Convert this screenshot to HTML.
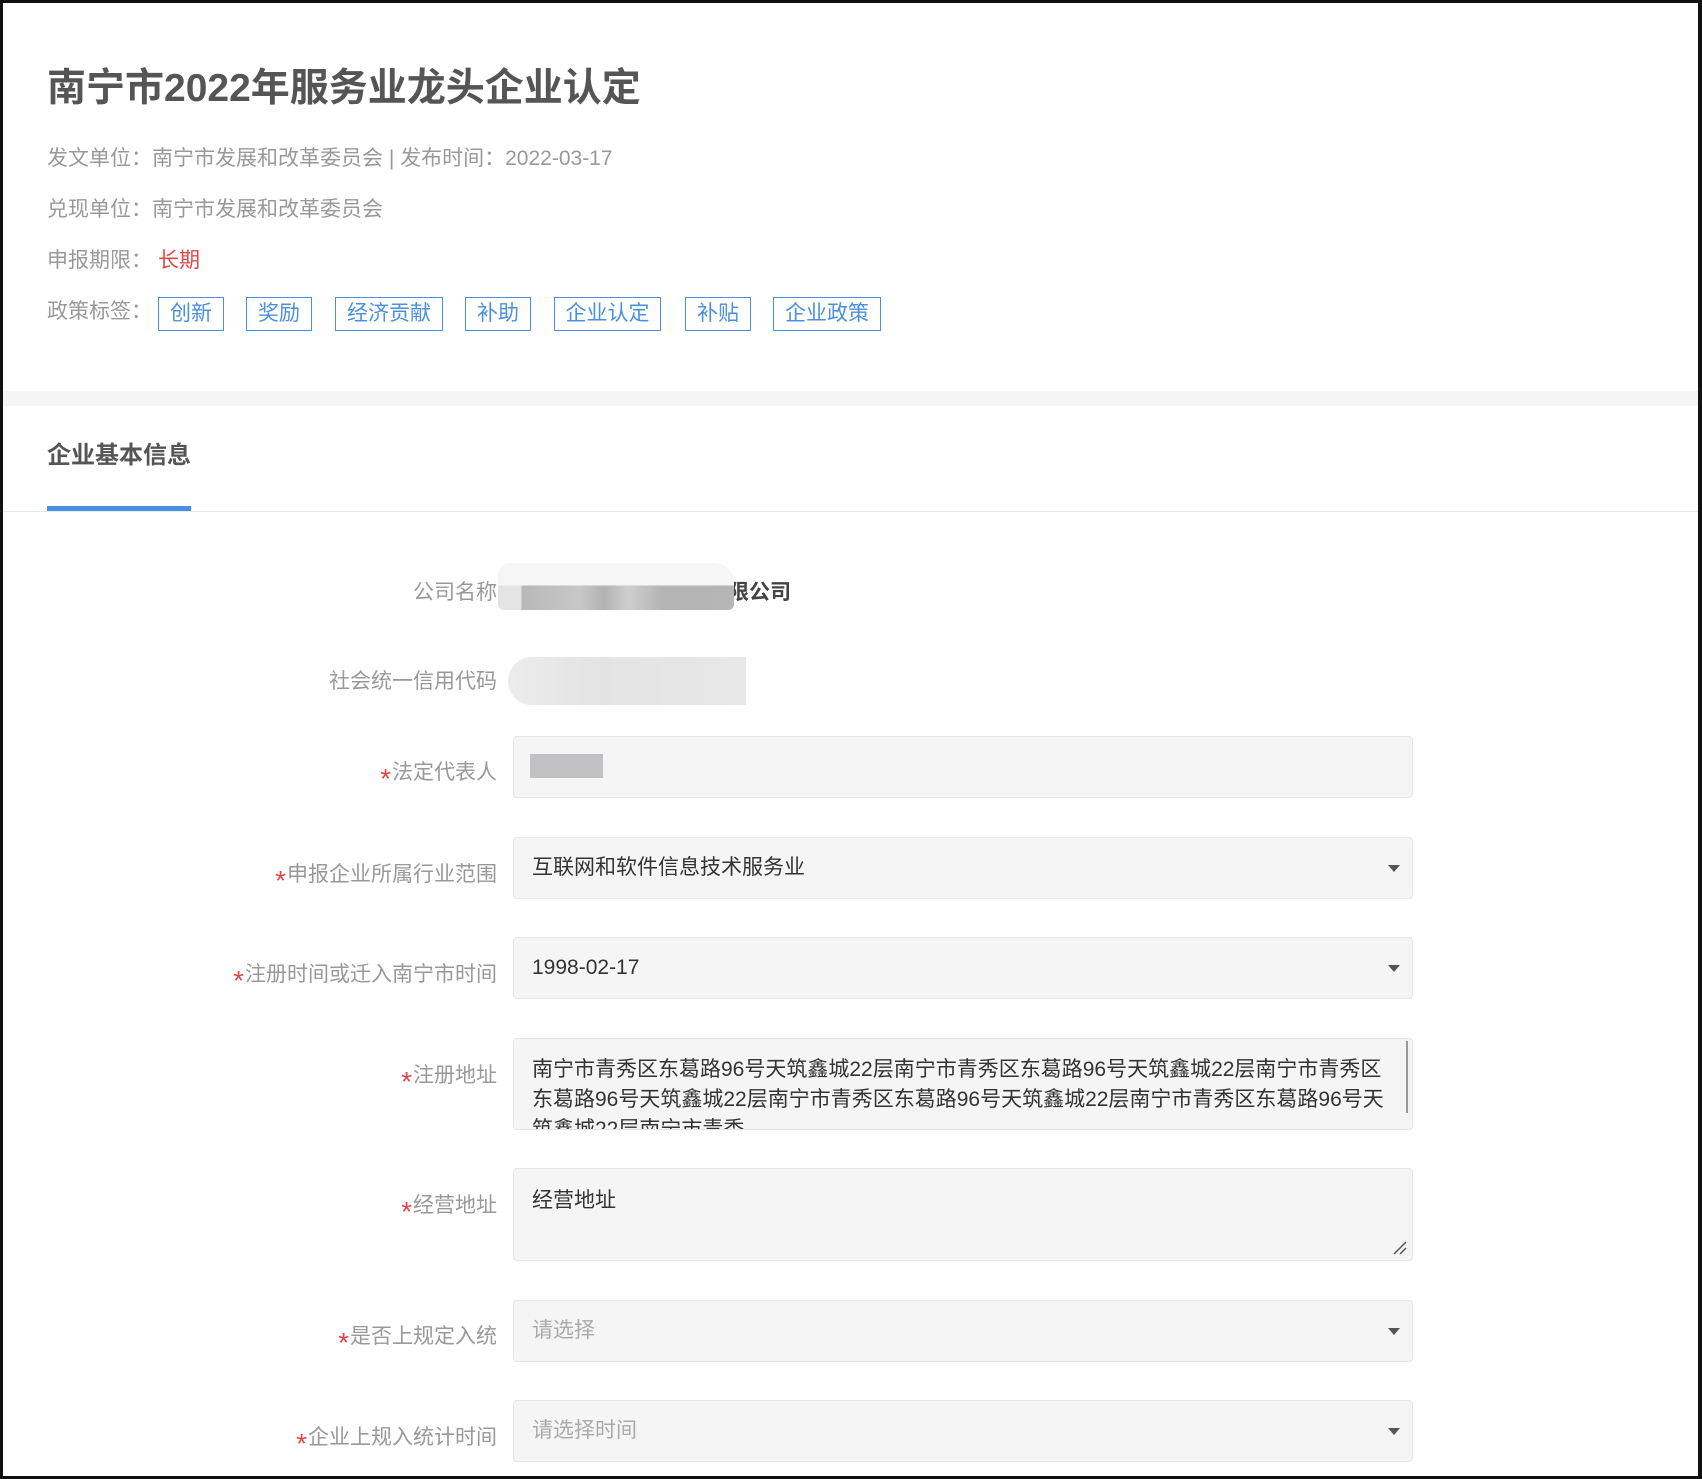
<!DOCTYPE html>
<html><head><meta charset="utf-8"><style>
*{margin:0;padding:0;box-sizing:border-box}
body{width:1702px;height:1479px;background:#fff;position:relative;overflow:hidden;font-family:"Liberation Sans","Noto Sans CJK SC",sans-serif}
.frame{position:absolute;left:0;top:0;width:1702px;height:1479px;border:3px solid #111;border-right-width:4px;pointer-events:none;z-index:10}
.abs{position:absolute;white-space:nowrap}
.title{left:47px;top:64px;font-size:39px;font-weight:bold;color:#555;line-height:50px}
.meta{left:47px;font-size:21px;color:#999;line-height:28px}
.tag{position:absolute;top:297px;height:34px;border:1.5px solid #4a90e2;color:#4a90e2;font-size:21px;line-height:31px;text-align:center}
.band{left:3px;top:391px;width:1696px;height:15px;background:#f5f5f5}
.lbl{position:absolute;right:1205px;font-size:21px;color:#999;line-height:28px;text-align:right;white-space:nowrap}
.lbl i{color:#e04848;font-style:normal;font-size:28px;position:relative;top:9px;margin-right:1px}
.inp{position:absolute;left:513px;width:900px;background:#f5f5f5;border:1px solid #e6e6e6;border-radius:4px;font-size:21px;color:#333;padding-left:18px}
.sel::after{content:"";position:absolute;right:12px;top:50%;margin-top:-3px;border-left:6px solid transparent;border-right:6px solid transparent;border-top:7px solid #555}
</style></head><body>
<div class="frame"></div>
<div class="abs title">南宁市2022年服务业龙头企业认定</div>
<div class="abs meta" style="top:145px">发文单位：南宁市发展和改革委员会 | 发布时间：2022-03-17</div>
<div class="abs meta" style="top:196px">兑现单位：南宁市发展和改革委员会</div>
<div class="abs meta" style="top:247px">申报期限：<span style="color:#e04848;margin-left:6px">长期</span></div>
<div class="abs meta" style="top:298px">政策标签：</div>
<div class="tag" style="left:158px;width:66px">创新</div>
<div class="tag" style="left:246px;width:66px">奖励</div>
<div class="tag" style="left:335px;width:108px">经济贡献</div>
<div class="tag" style="left:465px;width:66px">补助</div>
<div class="tag" style="left:554px;width:107px">企业认定</div>
<div class="tag" style="left:685px;width:66px">补贴</div>
<div class="tag" style="left:773px;width:108px">企业政策</div>
<div class="abs band"></div>
<div class="abs" style="left:47px;top:440px;font-size:24px;font-weight:bold;color:#555;line-height:32px">企业基本信息</div>
<div class="abs" style="left:47px;top:506px;width:144px;height:5px;background:#4a90e2"></div>
<div class="abs" style="left:3px;top:511px;width:1696px;height:1px;background:#e8e8e8"></div>

<div class="lbl" style="top:579px">公司名称</div>
<div class="abs" style="left:728px;top:579px;font-size:21px;font-weight:bold;color:#444;line-height:28px">限公司</div>
<div class="abs" style="left:498px;top:563px;width:236px;height:47px;background:linear-gradient(#f6f6f6 0,#f6f6f6 48%,transparent 48%),linear-gradient(90deg,#e4e4e4 0,#e4e4e4 10%,#b8b8b8 10%,#c8c8c8 35%,#b2b2b2 45%,#cfcfcf 55%,#b4b4b4 70%,#b6b6b6 100%);border-radius:12px 20px 6px 6px"></div>

<div class="lbl" style="top:668px">社会统一信用代码</div>
<div class="abs" style="left:508px;top:657px;width:238px;height:48px;background:linear-gradient(90deg,#ececec,#e3e3e3 40%,#e6e6e6 70%,#e8e8e8);border-radius:24px 0 0 24px"></div>

<div class="lbl" style="top:756px"><i>*</i>法定代表人</div>
<div class="inp" style="top:736px;height:62px"></div>
<div class="abs" style="left:530px;top:754px;width:73px;height:24px;background:#c2c2c4"></div>

<div class="lbl" style="top:858px"><i>*</i>申报企业所属行业范围</div>
<div class="inp sel" style="top:837px;height:62px;line-height:60px">互联网和软件信息技术服务业</div>

<div class="lbl" style="top:958px"><i>*</i>注册时间或迁入南宁市时间</div>
<div class="inp sel" style="top:937px;height:62px;line-height:60px">1998-02-17</div>

<div class="lbl" style="top:1059px"><i>*</i>注册地址</div>
<div class="inp" style="top:1038px;height:92px;overflow:hidden;padding-top:16px;line-height:30px;white-space:nowrap">南宁市青秀区东葛路96号天筑鑫城22层南宁市青秀区东葛路96号天筑鑫城22层南宁市青秀区<br>东葛路96号天筑鑫城22层南宁市青秀区东葛路96号天筑鑫城22层南宁市青秀区东葛路96号天<br>筑鑫城22层南宁市青秀</div>
<div class="abs" style="left:1406px;top:1041px;width:2px;height:72px;background:#999"></div>

<div class="lbl" style="top:1189px"><i>*</i>经营地址</div>
<div class="inp" style="top:1168px;height:93px;padding-top:17px;line-height:30px">经营地址</div>
<svg class="abs" style="left:1392px;top:1240px" width="16" height="16"><path d="M2 14L14 2M8 14L14 8" stroke="#555" stroke-width="1.5"/></svg>

<div class="lbl" style="top:1320px"><i>*</i>是否上规定入统</div>
<div class="inp sel" style="top:1300px;height:62px;line-height:60px;color:#aaa">请选择</div>

<div class="lbl" style="top:1421px"><i>*</i>企业上规入统计时间</div>
<div class="inp sel" style="top:1400px;height:62px;line-height:60px;color:#aaa">请选择时间</div>
</body></html>
